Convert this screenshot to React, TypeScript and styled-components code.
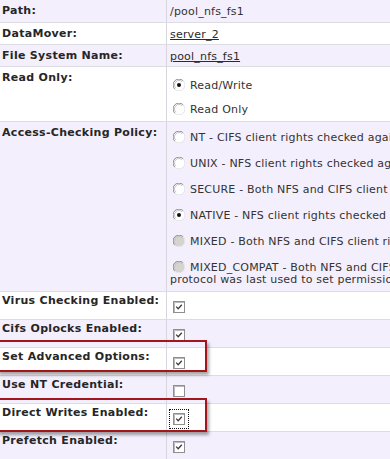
import React from "react";
import styled, { createGlobalStyle } from "styled-components";

const GlobalStyle = createGlobalStyle`
  html, body { margin: 0; padding: 0; background: #fff; overflow: hidden; }
  body {
    font-family: "DejaVu Sans", Verdana, sans-serif;
    font-size: 11px;
    color: #333;
  }
`;

const Page = styled.div`
  position: relative;
  width: 390px;
  height: 459px;
  overflow: hidden;
`;

const Table = styled.div`
  width: 760px;
`;

const Row = styled.div<{ $h: number; $alt?: boolean }>`
  display: flex;
  box-sizing: border-box;
  height: ${(p) => p.$h}px;
  border-bottom: 1px solid #dcdce2;
  background: ${(p) => (p.$alt ? "#f3effc" : "#ffffff")};
`;

const Label = styled.div<{ $top: number }>`
  flex: 0 0 167px;
  box-sizing: border-box;
  padding: ${(p) => p.$top}px 0 0 2px;
  border-right: 1px solid #d6d6dc;
  font-weight: bold;
  line-height: 13px;
  letter-spacing: 0.3px;
  color: #262626;
  white-space: nowrap;
`;

const Value = styled.div<{ $top: number }>`
  flex: 1;
  padding: ${(p) => p.$top}px 0 0 3px;
  line-height: 13px;
  letter-spacing: 0.2px;
  white-space: nowrap;
`;

const Link = styled.span`
  text-decoration: underline;
  color: #2b2b2b;
`;

const Options = styled.div<{ $gap: number }>`
  display: flex;
  flex-direction: column;
  gap: ${(p) => p.$gap}px;
`;

const Option = styled.div`
  line-height: 12px;
  white-space: nowrap;
`;

const RadioBox = styled.span`
  display: inline-block;
  width: 12px;
  height: 12px;
  margin: 0 5px 0 3px;
  vertical-align: -2px;
`;

const CheckBox = styled.span<{ $focus?: boolean }>`
  display: inline-block;
  width: 12px;
  height: 12px;
  margin-left: 3px;
  outline: ${(p) => (p.$focus ? "1px dotted #111" : "none")};
  outline-offset: 3px;
`;

const Callout = styled.div<{ $top: number; $h: number }>`
  position: absolute;
  left: -3px;
  top: ${(p) => p.$top}px;
  width: 210px;
  height: ${(p) => p.$h}px;
  box-sizing: border-box;
  border: 2px solid #a3161d;
  box-shadow: 2px 3px 3px rgba(0, 0, 0, 0.35);
  pointer-events: none;
`;

function Radio({ checked, disabled }: { checked?: boolean; disabled?: boolean }) {
  return (
    <RadioBox>
      <svg width="12" height="12" viewBox="0 0 12 12">
        <circle cx="6" cy="6" r="5.5" fill={disabled ? "#d6d4d0" : "#fff"} />
        <path d="M10.2 1.8 A5.5 5.5 0 0 0 1.8 10.2" stroke="#8a8a8a" strokeWidth="1" fill="none" />
        <path d="M1.8 10.2 A5.5 5.5 0 0 0 10.2 1.8" stroke="#e4e4e4" strokeWidth="1" fill="none" />
        <path d="M9.2 2.8 A4.4 4.4 0 0 0 2.8 9.2" stroke="#c4c4c4" strokeWidth="1" fill="none" />
        {checked && <circle cx="6" cy="6" r="2" fill="#111" />}
      </svg>
    </RadioBox>
  );
}

function Check({ checked, focus }: { checked?: boolean; focus?: boolean }) {
  return (
    <CheckBox $focus={focus}>
      <svg width="12" height="12" viewBox="0 0 12 12">
        <rect x="0.5" y="0.5" width="11" height="11" fill="#fff" stroke="#8f8f8f" />
        <path d="M1.5 11 V1.5 H11" stroke="#b8b8b8" fill="none" />
        {checked && (
          <path d="M3.2 5.6 L5.2 7.8 L8.8 3.8" stroke="#3c3c3c" strokeWidth="1.3" fill="none" />
        )}
      </svg>
    </CheckBox>
  );
}

const checks = [
  { label: "Virus Checking Enabled:", checked: true },
  { label: "Cifs Oplocks Enabled:", checked: true },
  { label: "Set Advanced Options:", checked: true },
  { label: "Use NT Credential:", checked: false },
  { label: "Direct Writes Enabled:", checked: true, focus: true },
  { label: "Prefetch Enabled:", checked: true },
];

export default function App() {
  return (
    <Page>
      <GlobalStyle />
      <Table>
        <Row $h={23} $alt>
          <Label $top={4}>Path:</Label>
          <Value $top={5}>/pool_nfs_fs1</Value>
        </Row>
        <Row $h={22}>
          <Label $top={4}>DataMover:</Label>
          <Value $top={5}>
            <Link>server_2</Link>
          </Value>
        </Row>
        <Row $h={22} $alt>
          <Label $top={4}>File System Name:</Label>
          <Value $top={5}>
            <Link>pool_nfs_fs1</Link>
          </Value>
        </Row>
        <Row $h={55}>
          <Label $top={4}>Read Only:</Label>
          <Value $top={12}>
            <Options $gap={11}>
              <Option>
                <Radio checked />
                Read/Write
              </Option>
              <Option>
                <Radio />
                Read Only
              </Option>
            </Options>
          </Value>
        </Row>
        <Row $h={170} $alt>
          <Label $top={4}>Access-Checking Policy:</Label>
          <Value $top={9}>
            <Options $gap={13}>
              <Option>
                <Radio />
                NT - CIFS client rights checked against ACLs; NFS client rights checked against ACLs and permissions
              </Option>
              <Option>
                <Radio />
                UNIX - NFS client rights checked against permissions; CIFS client rights checked against ACLs
              </Option>
              <Option>
                <Radio />
                SECURE - Both NFS and CIFS client rights checked against ACLs and permissions
              </Option>
              <Option>
                <Radio checked />
                NATIVE - NFS client rights checked against permissions; CIFS client rights checked against ACLs
              </Option>
              <Option>
                <Radio disabled />
                MIXED - Both NFS and CIFS client rights checked against ACLs
              </Option>
              <Option>
                <Radio disabled />
                MIXED_COMPAT - Both NFS and CIFS client rights checked against ACLs or permissions, whichever
                <br />
                protocol was last used to set permissions on the file system object
              </Option>
            </Options>
          </Value>
        </Row>
        {checks.map((c, i) => (
          <Row key={c.label} $h={28} $alt={i % 2 === 1}>
            <Label $top={2}>{c.label}</Label>
            <Value $top={9}>
              <Check checked={c.checked} focus={c.focus} />
            </Value>
          </Row>
        ))}
      </Table>
      <Callout $top={340} $h={32} />
      <Callout $top={398} $h={34} />
    </Page>
  );
}
